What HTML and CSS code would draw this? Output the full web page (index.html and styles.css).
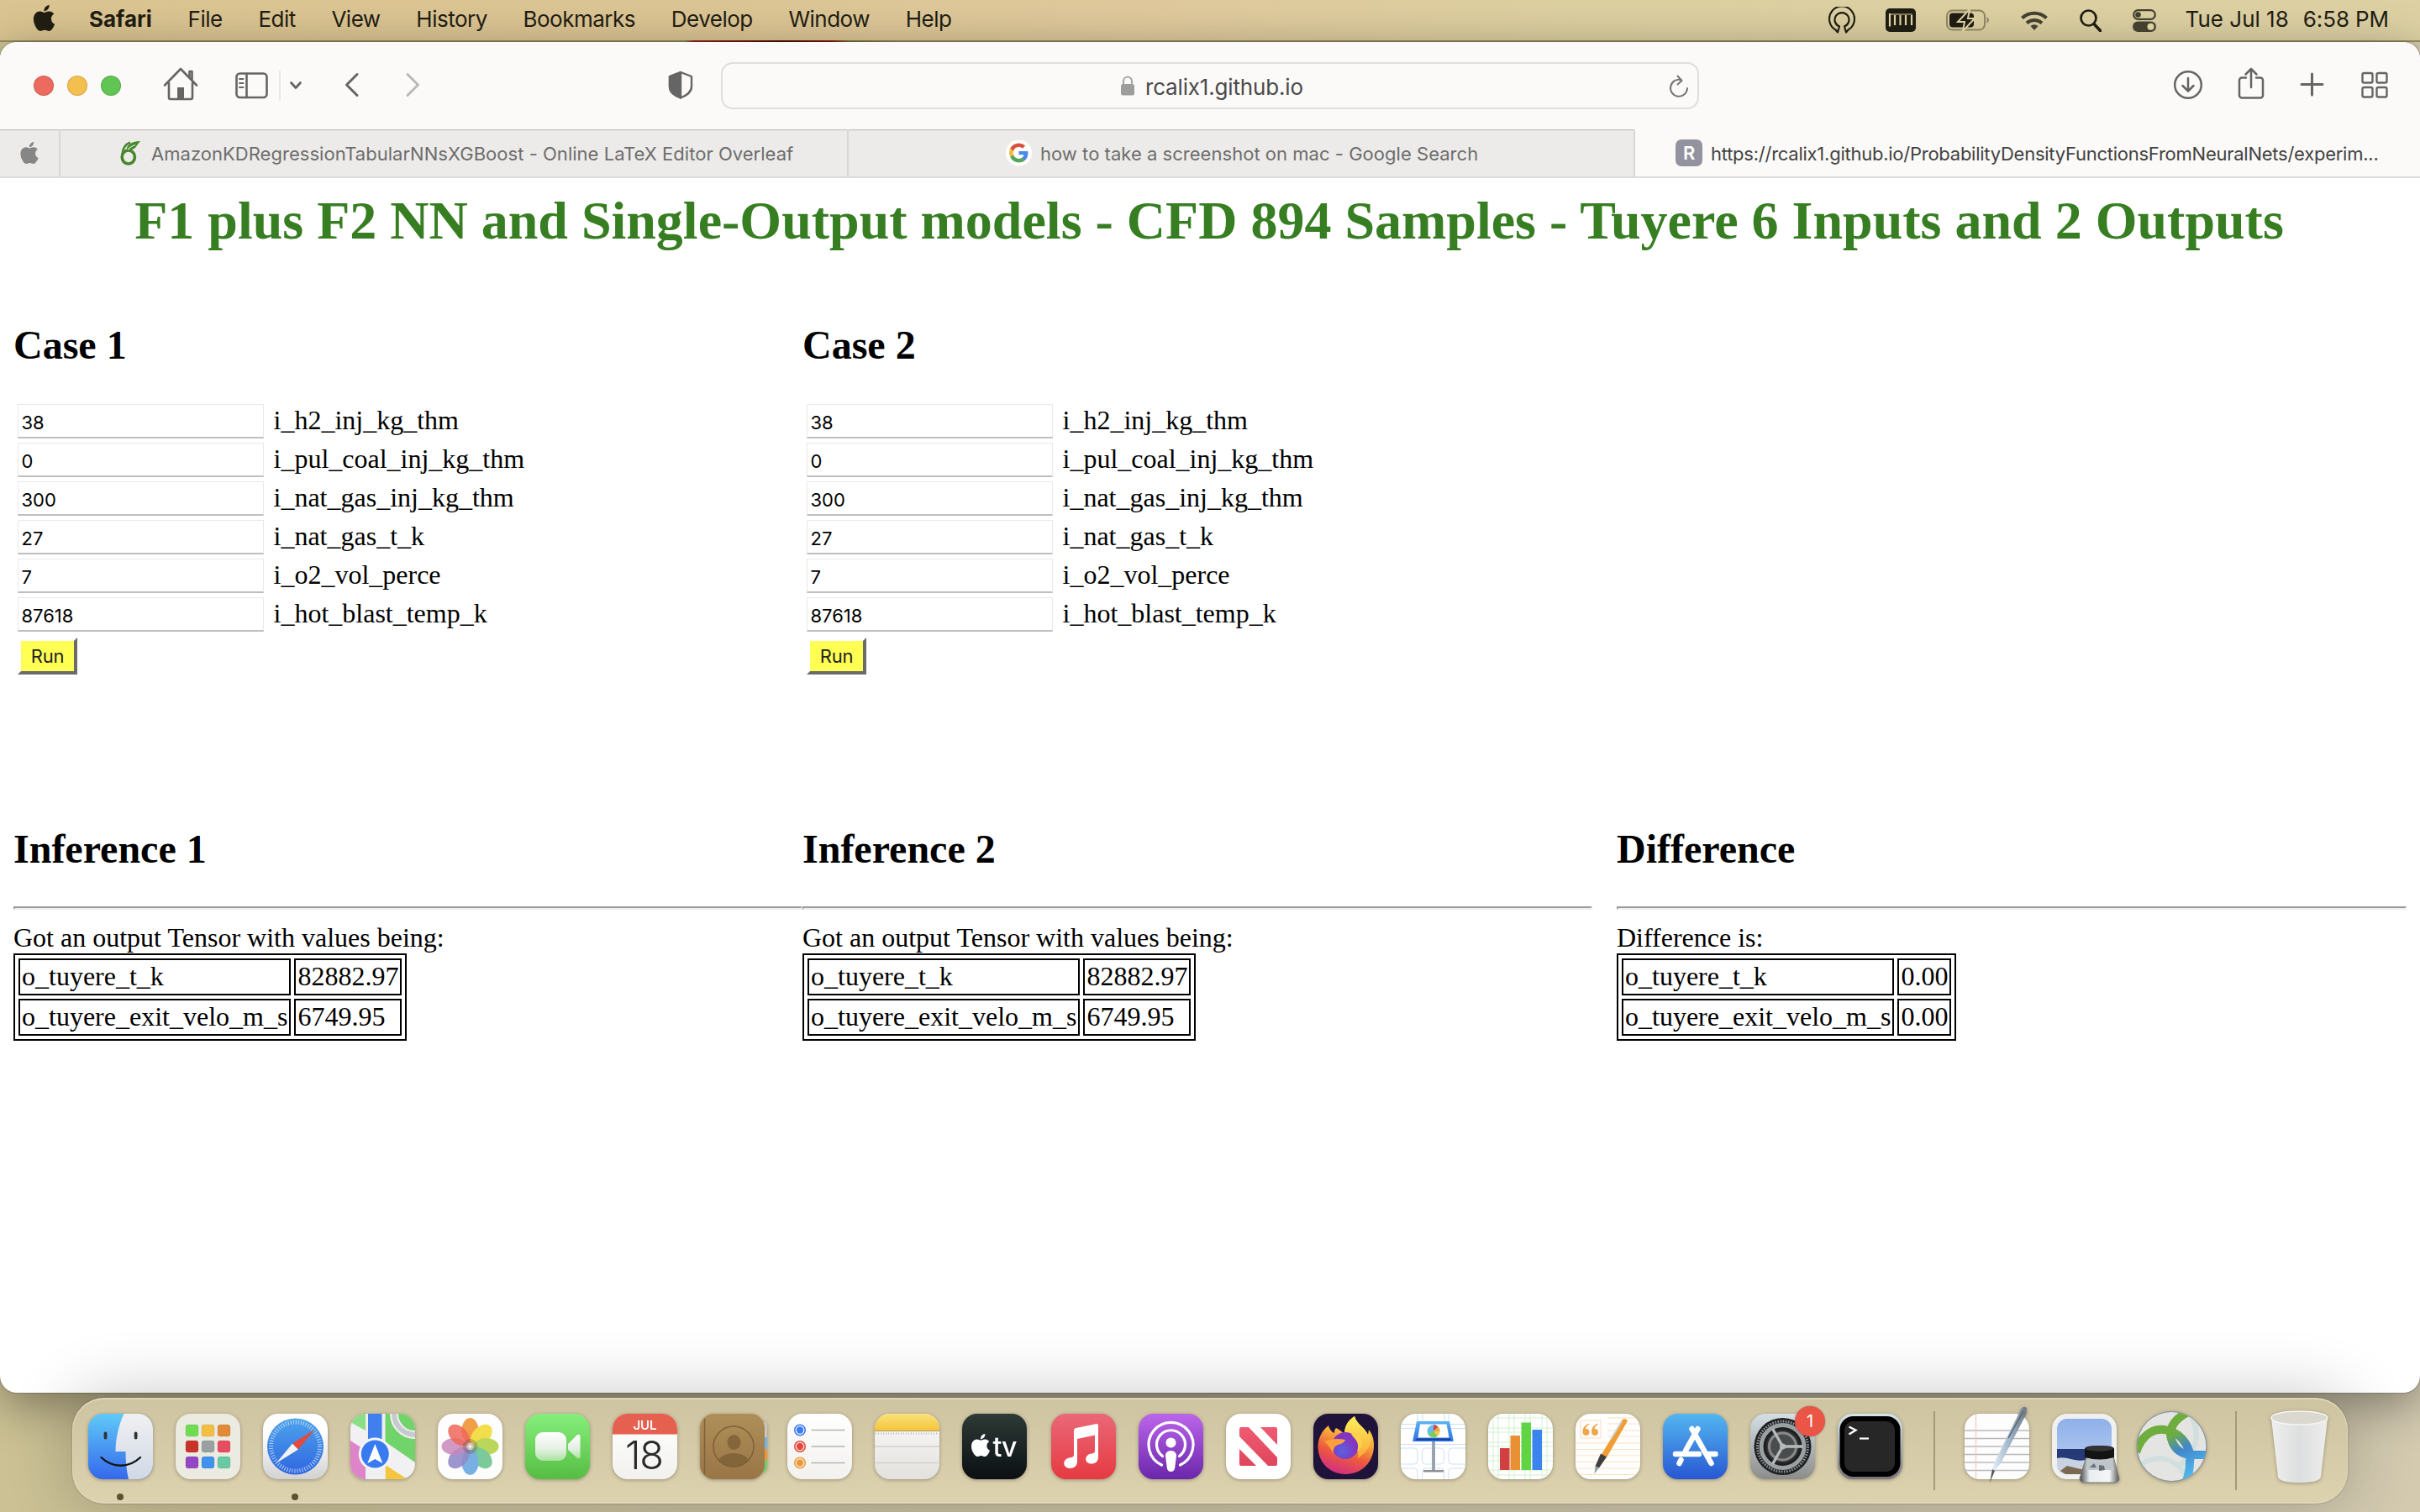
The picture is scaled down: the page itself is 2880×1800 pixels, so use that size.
FILE: index.html
```html
<!DOCTYPE html>
<html lang="en">
<head>
<meta charset="utf-8">
<title>Safari</title>
<link rel="stylesheet" href="styles.css">
</head>
<body>
<svg class="defs" aria-hidden="true">
  <defs>
    <symbol id="apple" viewBox="0 0 24 24"><path d="M12.152 6.896c-.948 0-2.415-1.078-3.96-1.04-2.04.027-3.91 1.183-4.961 3.014-2.117 3.675-.546 9.103 1.519 12.09 1.013 1.454 2.208 3.09 3.792 3.039 1.52-.065 2.09-.987 3.935-.987 1.831 0 2.35.987 3.96.948 1.637-.026 2.676-1.48 3.676-2.948 1.156-1.688 1.636-3.325 1.662-3.415-.039-.013-3.182-1.221-3.22-4.857-.026-3.04 2.48-4.494 2.597-4.559-1.429-2.09-3.623-2.324-4.39-2.376-2-.156-3.675 1.09-4.61 1.09zM15.53 3.83c.843-1.012 1.4-2.427 1.245-3.83-1.207.052-2.662.805-3.532 1.818-.78.896-1.454 2.338-1.273 3.714 1.338.104 2.715-.688 3.559-1.701"/></symbol>
    <clipPath id="tile"><rect width="77" height="78" rx="18"/></clipPath>
    <linearGradient id="gFinder" x2="0" y2="1"><stop offset="0" stop-color="#5fcaf8"/><stop offset="1" stop-color="#3568ec"/></linearGradient>
    <linearGradient id="gFace" x2="0" y2="1"><stop offset="0" stop-color="#f0f0f2"/><stop offset="1" stop-color="#d0d9e6"/></linearGradient>
    <linearGradient id="gSilver" x2="0" y2="1"><stop offset=".3" stop-color="#fff"/><stop offset="1" stop-color="#d2d2d2"/></linearGradient>
    <linearGradient id="gCompass" x2="0" y2="1"><stop offset="0" stop-color="#4da3ec"/><stop offset="1" stop-color="#2f66e0"/></linearGradient>
    <linearGradient id="gGreen" x2="0" y2="1"><stop offset="0" stop-color="#86ee7c"/><stop offset="1" stop-color="#56bd43"/></linearGradient>
    <linearGradient id="gCam" x2="0" y2="1"><stop offset="0" stop-color="#fff"/><stop offset=".6" stop-color="#e4efe2"/><stop offset="1" stop-color="#a9e39f"/></linearGradient>
    <linearGradient id="gPaper" x2="0" y2="1"><stop offset="0" stop-color="#fff"/><stop offset="1" stop-color="#f2f1ee"/></linearGradient>
    <linearGradient id="gBook" x2="0" y2="1"><stop offset="0" stop-color="#ae8f58"/><stop offset="1" stop-color="#9a7547"/></linearGradient>
    <linearGradient id="gYellow" x2="0" y2="1"><stop offset="0" stop-color="#fae27a"/><stop offset="1" stop-color="#f4c43c"/></linearGradient>
    <linearGradient id="gNote" x2="0" y2="1"><stop offset="0" stop-color="#fafafa"/><stop offset="1" stop-color="#e3e1dd"/></linearGradient>
    <linearGradient id="gTv" x2="0" y2="1"><stop offset="0" stop-color="#2d3a36"/><stop offset="1" stop-color="#0b0f12"/></linearGradient>
    <linearGradient id="gMusic" x2="0" y2="1"><stop offset="0" stop-color="#ea6878"/><stop offset="1" stop-color="#e63a41"/></linearGradient>
    <linearGradient id="gPod" x2="0" y2="1"><stop offset="0" stop-color="#bb66ea"/><stop offset="1" stop-color="#6b26ab"/></linearGradient>
    <linearGradient id="gNews" x2="0" y2="1"><stop offset="0" stop-color="#ee5b71"/><stop offset="1" stop-color="#e0465c"/></linearGradient>
    <linearGradient id="gFox" x1=".75" y1="0" x2=".4" y2="1"><stop offset="0" stop-color="#fcee52"/><stop offset=".4" stop-color="#f7a93a"/><stop offset=".68" stop-color="#ee5a3c"/><stop offset="1" stop-color="#d42f7f"/></linearGradient>
    <linearGradient id="gFlame" x2="0" y2="1"><stop offset="0" stop-color="#fdf05a"/><stop offset="1" stop-color="#f9a83a"/></linearGradient>
    <radialGradient id="gGlobe" cx=".4" cy=".7"><stop offset="0" stop-color="#5a62e0"/><stop offset="1" stop-color="#8435c0"/></radialGradient>
    <linearGradient id="gScreen" x2="0" y2="1"><stop offset="0" stop-color="#5ab4f4"/><stop offset="1" stop-color="#2f6ee4"/></linearGradient>
    <linearGradient id="gStore" x2="0" y2="1"><stop offset="0" stop-color="#53b6f0"/><stop offset="1" stop-color="#2857d3"/></linearGradient>
    <linearGradient id="gGear" x2="0" y2="1"><stop offset="0" stop-color="#d3dfe5"/><stop offset="1" stop-color="#8d8c8b"/></linearGradient>
    <linearGradient id="gTerm" x2="0" y2="1"><stop offset="0" stop-color="#d4e6ea"/><stop offset="1" stop-color="#77757a"/></linearGradient>
    <linearGradient id="gPen"><stop offset="0" stop-color="#e5effa"/><stop offset=".5" stop-color="#9fb5c9"/><stop offset="1" stop-color="#6c7882"/></linearGradient>
    <linearGradient id="gSky" x2="0" y2="1"><stop offset="0" stop-color="#8fb0ea"/><stop offset="1" stop-color="#bcd0f0"/></linearGradient>
    <linearGradient id="gGlass"><stop offset="0" stop-color="#444"/><stop offset=".25" stop-color="#e9edf0"/><stop offset=".75" stop-color="#f4f6f7"/><stop offset="1" stop-color="#555"/></linearGradient>
    <linearGradient id="gCup"><stop offset="0" stop-color="#f2f2f3"/><stop offset=".5" stop-color="#e0e1e3"/><stop offset="1" stop-color="#f0f0f1"/></linearGradient>
    <linearGradient id="gRing" gradientUnits="userSpaceOnUse" x1="32" y1="18" x2="58" y2="72"><stop offset="0" stop-color="#6fad3f"/><stop offset=".15" stop-color="#6fad3f"/><stop offset=".5" stop-color="#4286c8"/><stop offset="1" stop-color="#4eb4ec"/></linearGradient>
  </defs>
</svg>

<header class="menubar">
  <svg class="menu-apple"><use href="#apple"/></svg>
  <nav class="menus">
    <b>Safari</b><span>File</span><span>Edit</span><span>View</span><span>History</span><span>Bookmarks</span><span>Develop</span><span>Window</span><span>Help</span>
  </nav>
  <div class="status">
    <svg width="32" height="32" viewBox="0 0 32 32" fill="none" stroke="#1f1c12" stroke-width="2.2" stroke-linejoin="round"><path d="M11 31 L8.500 28 A15 15 0 1 1 23.500 28 L21 31 L19 24 A8.500 8.500 0 1 0 13 24 Z" transform="translate(0 -.5)"/></svg>
    <svg width="36" height="28" viewBox="0 0 36 28"><rect width="36" height="28" rx="5" fill="#1f1c12"/><path d="M5 6v15.500M11 8v12M17.500 8v12M24 8v12M31 8v12" stroke="#ddd0a0" stroke-width="2.200"/><path d="M5 7h27" stroke="#ddd0a0" stroke-width="1"/></svg>
    <svg width="52" height="26" viewBox="0 0 52 26"><rect x="1" y="1.500" width="45" height="23" rx="6.500" fill="none" stroke="#8b8362" stroke-width="2"/><path d="M48.500 9a4.500 4.500 0 0 1 0 8z" fill="#8b8362"/><rect x="4" y="4.500" width="29" height="17" rx="4" fill="#1f1c12"/><path d="M28 0 L14 15h8L20 26 L34 11h-8z" fill="#1f1c12" stroke="#ddd0a0" stroke-width="2"/></svg>
    <svg width="34" height="25" viewBox="0 0 34 25" fill="none" stroke="#444030" stroke-width="4"><path d="M2.500 9.500a21 21 0 0 1 29 0M8 15.500a13 13 0 0 1 18 0"/><path d="M17 24l-4.500-5a6.500 6.500 0 0 1 9 0z" fill="#444030" stroke="none"/></svg>
    <svg width="26" height="27" viewBox="0 0 26 27" fill="none" stroke="#1f1c12" stroke-width="2.700"><circle cx="10.500" cy="10.500" r="9"/><path d="M17 17.500l7.500 8" stroke-width="3.500" stroke-linecap="round"/></svg>
    <svg width="28" height="27" viewBox="0 0 28 27"><rect x="1.200" y="1.200" width="25.600" height="10.600" rx="5.300" fill="none" stroke="#444030" stroke-width="2.200"/><circle cx="6.500" cy="6.500" r="3.300" fill="#444030"/><rect y="14.500" width="28" height="12.500" rx="6.200" fill="#444030"/><circle cx="21.500" cy="20.700" r="4" fill="#ddd0a0"/></svg>
    <span class="date">Tue Jul 18</span><span class="clock">6:58 PM</span>
  </div>
</header>

<main class="desktop">
  <div class="wallpaper-sliver"></div>
  <section class="window">
    <div class="toolbar">
      <div class="tools-left">
        <i class="light red"></i><i class="light amber"></i><i class="light green"></i>
        <svg class="ico home" viewBox="0 0 48 48" stroke-width="2.600"><path d="M5 26.500L24 7l19 19.500M34.500 17v-7h3v10M10 24v17a2 2 0 0 0 2 2h24a2 2 0 0 0 2-2V24"/><path d="M20 29h8v14h-8z" fill="#656565" stroke="none"/></svg>
        <svg class="ico side" viewBox="0 0 48 48" stroke-width="2.600"><rect x="5.500" y="9.500" width="36" height="28.500" rx="4"/><path d="M17.500 10v28"/><path d="M9 16h4.500M9 21h4.500M9 26h4.500" stroke-width="2"/></svg>
        <i class="divider"></i>
        <svg class="ico chev" viewBox="0 0 24 24" stroke-width="2.800"><path d="M6.500 8.500l5.500 6 5.500-6"/></svg>
        <svg class="ico back" viewBox="0 0 48 48" stroke-width="3"><path d="M30 10.500L17.500 23 30 35.500"/></svg>
        <svg class="ico fwd" viewBox="0 0 48 48" stroke-width="3"><path d="M18 10.500L30.500 23 18 35.500"/></svg>
        <svg class="ico shield" viewBox="0 0 48 48" stroke-width="2.400"><path d="M24 8l13 5v12c0 7-6 10.500-13 13.500C17 35.500 11 32 11 25V13z"/><path d="M24 8v30.500C17 35.500 11 32 11 25V13z" fill="#656565"/></svg>
      </div>
      <div class="address">
        <svg width="16" height="24" viewBox="0 0 16 24"><rect y="10" width="16" height="13.500" rx="2.500" fill="#9d9d9b"/><path d="M3 11V6.500a5 5 0 0 1 10 0V11" fill="none" stroke="#a8a8a6" stroke-width="2.200"/></svg>
        <span>rcalix1.github.io</span>
        <svg class="reload" width="24" height="28" viewBox="0 0 24 28" fill="none" stroke="#747474" stroke-width="2" stroke-linecap="round" stroke-linejoin="round"><path d="M15 6.300A10 10 0 1 0 22 16M10.500 1.500L15.500 7l-5 4.500"/></svg>
      </div>
      <div class="tools-right">
        <svg class="ico" viewBox="0 0 48 48" stroke-width="2.500"><circle cx="24" cy="23" r="15.800"/><path d="M24 15v15M17.500 24l6.500 6.500 6.500-6.500"/></svg>
        <svg class="ico share" viewBox="0 0 48 48" stroke-width="2.500"><path d="M18 14.500h-5a3 3 0 0 0-3 3V35.500a3 3 0 0 0 3 3h22a3 3 0 0 0 3-3V17.500a3 3 0 0 0-3-3h-5M24 26V4.500M17.500 10.500L24 4l6.500 6.500"/></svg>
        <svg class="ico plus" viewBox="0 0 48 48" stroke-width="3"><path d="M24.500 10v25M12 22.500h25"/></svg>
        <svg class="ico grid" viewBox="0 0 48 48" stroke-width="2.400"><rect x="9.500" y="9" width="12" height="11.500" rx="2"/><rect x="26.500" y="9" width="12" height="11.500" rx="2"/><rect x="9.500" y="26" width="12" height="11.500" rx="2"/><rect x="26.500" y="26" width="12" height="11.500" rx="2"/></svg>
      </div>
    </div>
    <div class="tabs">
      <div class="tab pinned"><svg width="26" height="26" fill="#868686"><use href="#apple"/></svg></div>
      <div class="tab t1"><svg width="25" height="30" viewBox="0 0 25 30" fill="none" stroke="#46892c"><ellipse cx="9.800" cy="20" rx="7.600" ry="8" stroke-width="3.600"/><path d="M2.500 17C3 9 7 4.500 12 2.500" stroke-width="2.600"/><path d="M7.500 11.500C8 6 12 1.500 24 1c-1 2-3 3-4 5-2 4-6 6-11 6.500" stroke="none" fill="#46892c"/><path d="M9 11q4-4 9-5.500" stroke="#ecebe9" stroke-width="1.200"/></svg><span>AmazonKDRegressionTabularNNsXGBoost - Online LaTeX Editor Overleaf</span></div>
      <div class="tab t2"><svg width="31" height="32" viewBox="0 0 31 32"><circle cx="15.500" cy="16" r="15.500" fill="#fff"/><g transform="translate(3 3.500) scale(1.040)"><path d="M22.560 12.250c0-.780-.070-1.530-.200-2.250H12v4.260h5.920a5.060 5.060 0 0 1-2.200 3.320v2.770h3.570c2.080-1.920 3.270-4.740 3.270-8.100z" fill="#4f86ec"/><path d="M12 23c2.970 0 5.460-.980 7.280-2.660l-3.570-2.770c-.980.660-2.230 1.060-3.710 1.060-2.860 0-5.290-1.930-6.160-4.530H2.180v2.840A11 11 0 0 0 12 23z" fill="#58a55c"/><path d="M5.840 14.100a6.600 6.600 0 0 1 0-4.200V7.060H2.180a11 11 0 0 0 0 9.880z" fill="#f1bd42"/><path d="M12 5.380c1.620 0 3.060.560 4.210 1.640l3.150-3.150A11 11 0 0 0 2.180 7.060L5.840 9.900C6.710 7.310 9.140 5.380 12 5.380z" fill="#d95140"/></g></svg><span>how to take a screenshot on mac - Google Search</span></div>
      <div class="tab t3"><i class="letter">R</i><span>https://rcalix1.github.io/ProbabilityDensityFunctionsFromNeuralNets/experim...</span></div>
    </div>

    <article class="page">
      <h1>F1 plus F2 NN and Single-Output models - CFD 894 Samples - Tuyere 6 Inputs and 2 Outputs</h1>
      <div class="cols cases">
        <form>
          <h2>Case 1</h2>
          <label><input value="38">i_h2_inj_kg_thm</label>
          <label><input value="0">i_pul_coal_inj_kg_thm</label>
          <label><input value="300">i_nat_gas_inj_kg_thm</label>
          <label><input value="27">i_nat_gas_t_k</label>
          <label><input value="7">i_o2_vol_perce</label>
          <label><input value="87618">i_hot_blast_temp_k</label>
          <button type="button">Run</button>
        </form>
        <form>
          <h2>Case 2</h2>
          <label><input value="38">i_h2_inj_kg_thm</label>
          <label><input value="0">i_pul_coal_inj_kg_thm</label>
          <label><input value="300">i_nat_gas_inj_kg_thm</label>
          <label><input value="27">i_nat_gas_t_k</label>
          <label><input value="7">i_o2_vol_perce</label>
          <label><input value="87618">i_hot_blast_temp_k</label>
          <button type="button">Run</button>
        </form>
      </div>
      <div class="cols results">
        <section>
          <h2>Inference 1</h2><hr>
          <p>Got an output Tensor with values being:</p>
          <table><tr><td>o_tuyere_t_k</td><td>82882.97</td></tr><tr><td>o_tuyere_exit_velo_m_s</td><td>6749.95</td></tr></table>
        </section>
        <section>
          <h2>Inference 2</h2><hr>
          <p>Got an output Tensor with values being:</p>
          <table><tr><td>o_tuyere_t_k</td><td>82882.97</td></tr><tr><td>o_tuyere_exit_velo_m_s</td><td>6749.95</td></tr></table>
        </section>
        <section class="diff">
          <h2>Difference</h2><hr>
          <p>Difference is:</p>
          <table><tr><td>o_tuyere_t_k</td><td>0.00</td></tr><tr><td>o_tuyere_exit_velo_m_s</td><td>0.00</td></tr></table>
        </section>
      </div>
    </article>
  </section>

  <footer class="dock">
    <!-- Finder -->
    <div class="app running"><svg viewBox="0 0 77 78"><g clip-path="url(#tile)"><rect width="77" height="78" fill="url(#gFinder)"/><path d="M42.500 0C36 14 32.500 30 32.500 45h12c0 12 1 22 3.500 33H77V0z" fill="url(#gFace)"/></g><path d="M20.500 23.500v5M56.600 23.500v5" stroke="#333" stroke-width="3.800" stroke-linecap="round"/><path d="M15.500 52c13 13 33 13 46.500 0" fill="none" stroke="#151515" stroke-width="2.400" stroke-linecap="round"/></svg></div>
    <!-- Launchpad -->
    <div class="app"><svg viewBox="0 0 77 78"><rect width="77" height="78" rx="18" fill="#ecebe2"/><g stroke="#0002" stroke-width=".6"><rect x="12" y="13" width="15" height="14" rx="3" fill="#6fdc52"/><rect x="31" y="13" width="15" height="14" rx="3" fill="#f3bf43"/><rect x="50" y="13" width="15" height="14" rx="3" fill="#e28a36"/><rect x="12" y="32" width="15" height="14" rx="3" fill="#c8332a"/><rect x="31" y="32" width="15" height="14" rx="3" fill="#9ba1a3"/><rect x="50" y="32" width="15" height="14" rx="3" fill="#e84c60"/><rect x="12" y="51" width="15" height="14" rx="3" fill="#9346c6"/><rect x="31" y="51" width="15" height="14" rx="3" fill="#3f92ee"/><rect x="50" y="51" width="15" height="14" rx="3" fill="#68c9a4"/></g></svg></div>
    <!-- Safari -->
    <div class="app running"><svg viewBox="0 0 77 78"><rect width="77" height="78" rx="18" fill="url(#gSilver)"/><circle cx="38.500" cy="39" r="33.500" fill="url(#gCompass)"/><circle cx="38.500" cy="39" r="29" fill="none" stroke="#d5e6fa" stroke-width="5" stroke-dasharray=".8 2.240"/><path d="M15.500 59L35 35.500l7 7z" fill="#f2f2f2"/><path d="M62 18.500L35 35.500l7 7z" fill="#e4493c"/></svg></div>
    <!-- Maps -->
    <div class="app"><svg viewBox="0 0 77 78"><g clip-path="url(#tile)"><rect width="77" height="78" fill="#f1f1f4"/><path d="M0 0h18v20L0 10z" fill="#8ade84"/><path d="M41 0h36v58L41 33z" fill="#71d46a"/><path d="M0 32l22 14v32H0z" fill="#de84c8"/><path d="M41.500 61L68 78H41.500z" fill="#f4c63f"/><circle cx="77" cy="0" r="25" fill="none" stroke="#f0f0f2" stroke-width="10"/><circle cx="77" cy="0" r="25" fill="none" stroke="#c8c8d0" stroke-width="6"/><path d="M18 0h23.500v78H18z" fill="#efeff2"/><path d="M21 0h16.500v40H21z" fill="#417fee"/></g><circle cx="29.300" cy="48" r="19.500" fill="#f4f4f8"/><circle cx="29.300" cy="48" r="16.500" fill="#387bf0"/><path d="M29.300 36l9 23-9-5-9 5z" fill="#fff"/></svg></div>
    <!-- Photos -->
    <div class="app"><svg viewBox="0 0 77 78"><rect width="77" height="78" rx="18" fill="#fdfdfd"/><g transform="translate(38.500 39)" opacity=".92"><ellipse cy="-19" rx="10" ry="15" fill="#f1963a"/><ellipse cy="-19" rx="10" ry="15" fill="#f2dc3c" transform="rotate(45)"/><ellipse cy="-19" rx="10" ry="15" fill="#b5d44f" transform="rotate(90)"/><ellipse cy="-19" rx="10" ry="15" fill="#72c691" transform="rotate(135)"/><ellipse cy="-19" rx="10" ry="15" fill="#6eaae2" transform="rotate(180)"/><ellipse cy="-19" rx="10" ry="15" fill="#8a7fc4" opacity=".9" transform="rotate(225)"/><ellipse cy="-19" rx="10" ry="15" fill="#c47fb4" opacity=".85" transform="rotate(270)"/><ellipse cy="-19" rx="10" ry="15" fill="#ee5a4c" opacity=".85" transform="rotate(315)"/><circle r="9" fill="#5a3a30" opacity=".3"/></g><circle cx="38.500" cy="39" r="1.500" fill="#fff"/></svg></div>
    <!-- FaceTime -->
    <div class="app"><svg viewBox="0 0 77 78"><rect width="77" height="78" rx="18" fill="url(#gGreen)"/><rect x="12" y="22" width="37" height="34" rx="9" fill="url(#gCam)"/><path d="M51 36l10-10c2-2 4.500-1.500 4.500 1v24c0 2.500-2.500 3-4.500 1L51 43z" fill="url(#gCam)"/></svg></div>
    <!-- Calendar -->
    <div class="app"><svg viewBox="0 0 77 78"><rect width="77" height="78" rx="18" fill="url(#gPaper)"/><g clip-path="url(#tile)"><path d="M0 0h77v24.500H0z" fill="#e6604f"/></g><text x="38.500" y="19" class="cal-month">JUL</text><text x="37.500" y="66" class="cal-day">18</text></svg></div>
    <!-- Contacts -->
    <div class="app"><svg viewBox="0 0 77 78"><path d="M70 10h6q4 0 4 6v12H70z" fill="#c9c7bf"/><path d="M70 28h10v14H70z" fill="#6cb6ea"/><path d="M70 42h10v13H70z" fill="#ef9637"/><path d="M70 55h10v7q0 6-5 8h-5z" fill="#6fce66"/><rect width="77" height="78" rx="17" fill="url(#gBook)"/><path d="M5.500 6v66" stroke="#7d6036" stroke-width="1.500"/><circle cx="40" cy="39" r="24" fill="none" stroke="#7d6036" stroke-width="1.500"/><g fill="#7d6036" opacity=".8"><ellipse cx="40.500" cy="34" rx="8" ry="9"/><path d="M22 56c4-12 32-12 36 0-10 10-26 10-36 0z"/></g></svg></div>
    <!-- Reminders -->
    <div class="app"><svg viewBox="0 0 77 78"><rect width="77" height="78" rx="18" fill="url(#gPaper)"/><g stroke-width="1.600" fill="none"><circle cx="15" cy="19.500" r="6.200" stroke="#3b7cf0"/><circle cx="15" cy="39" r="6.200" stroke="#e2493b"/><circle cx="15" cy="58.500" r="6.200" stroke="#eb9a3a"/></g><circle cx="15" cy="19.500" r="4.200" fill="#3b7cf0"/><circle cx="15" cy="39" r="4.200" fill="#e2493b"/><circle cx="15" cy="58.500" r="4.200" fill="#eb9a3a"/><path d="M28.500 19.500h40M28.500 39h40M28.500 58.500h40" stroke="#b5b5b3" stroke-width="1.400"/></svg></div>
    <!-- Notes -->
    <div class="app"><svg viewBox="0 0 77 78"><rect width="77" height="78" rx="18" fill="url(#gNote)"/><g clip-path="url(#tile)"><path d="M0 0h77v20H0z" fill="url(#gYellow)"/></g><path d="M0 20.500h77" stroke="#b29a52"/><path d="M1 23.500h75" stroke="#bbb" stroke-width="2" stroke-dasharray="1 2"/><path d="M0 39h77M0 58.500h77" stroke="#d2d1cf" stroke-width="1.400"/></svg></div>
    <!-- TV -->
    <div class="app tv"><svg viewBox="0 0 77 78"><rect width="77" height="78" rx="18" fill="url(#gTv)"/><use href="#apple" x="8.500" y="24" width="27" height="27" fill="#fff"/><text x="36.500" y="51" class="tv-word">tv</text></svg></div>
    <!-- Music -->
    <div class="app"><svg viewBox="0 0 77 78"><rect width="77" height="78" rx="18" fill="url(#gMusic)"/><path d="M27 20q0-2.500 2.500-3L53 12.200q3-.600 3 2V52c0 5-4 7.500-8 7.500-9 0-9-11 0-12 3-.400 4-1 4-4V25.500L31 30v27c0 5-4 8-8.500 8-9.500 0-9.500-11-1-12.500 4-.700 5.500-1 5.500-4z" fill="#fff"/></svg></div>
    <!-- Podcasts -->
    <div class="app"><svg viewBox="0 0 77 78"><rect width="77" height="78" rx="18" fill="url(#gPod)"/><g fill="none" stroke="#fff" stroke-width="3.200" stroke-linecap="round"><path d="M27.500 61a26.500 26.500 0 1 1 22 0M28.500 50.500a17 17 0 1 1 20 0"/></g><circle cx="38.500" cy="34.500" r="6" fill="#fff"/><path d="M32 50c0-8 13-8 13 0l-1.800 14.500c-.700 6-8.700 6-9.400 0z" fill="#fff"/></svg></div>
    <!-- News -->
    <div class="app"><svg viewBox="0 0 77 78"><rect width="77" height="78" rx="18" fill="#fff"/><path d="M16 18q0-2 2-2h9l34 36v8q0 2-2 2h-9L16 27zM41 16h18q2 0 2 2v19zM16 42l20 20H18q-2 0-2-2z" fill="url(#gNews)"/></svg></div>
    <!-- Firefox -->
    <div class="app"><svg viewBox="0 0 77 78"><rect width="77" height="78" rx="18" fill="#20133a"/><path d="M49 3c-8 5-12 12-12 21-3-3-6-5-10-7-2 2-2 4-2 6-3-1-6-5-7-9C10 20 5 30 5.500 41 7 61 22 72 38.500 72 57 72 72 58 72 38c0-8-2-14-6-19l-1 6C60 15 52 13 49 3z" fill="url(#gFox)"/><path d="M49 3c-8 5-12 12-12 21 9-3 16 2 17 9l-1 20c11-8 16-14 15-28l-3 0C60 15 52 13 49 3z" fill="url(#gFlame)"/><circle cx="38" cy="38" r="16" fill="url(#gGlobe)"/><path d="M13 33c7-3 15-4 25-2-1 3-4 5-9 6-5 2-6 7-5 12-2-6-5-10-11-16z" fill="#f9a03c"/><path d="M47 27c5 5 8 10 5 18 5-3 7-10 5-16-3-5-7-6-12-5z" fill="#fbd34b"/></svg></div>
    <!-- Keynote -->
    <div class="app"><svg viewBox="0 0 77 78"><rect width="77" height="78" rx="18" fill="#fff"/><g clip-path="url(#tile)" fill="none" stroke="#cfe0f2"><path d="M0 12.500h77M0 17.500h77M20 0v17M26 0v17M52 0v17M57 0v17"/><rect x="-8" y="41" width="28" height="19" rx="4"/><rect x="25.500" y="41" width="26" height="19" rx="4"/><rect x="57" y="41" width="28" height="19" rx="4"/><rect x="-8" y="65" width="28" height="19" rx="4"/><rect x="25.500" y="65" width="26" height="19" rx="4"/><rect x="57" y="65" width="28" height="19" rx="4"/><path d="M0 36.500h77"/></g><path d="M37 33h4v34h-4z" fill="#9aa4b0"/><path d="M27 67h24v2.500H27z" fill="#8d8f92"/><path d="M19 9h39l4.500 22v2h-48v-2z" fill="url(#gScreen)"/><path d="M23 12.500h31.500l3 16h-37z" fill="#fff"/><path d="M18.500 30.500h41" stroke="#153f9a" stroke-width="1.800"/><circle cx="39" cy="20.700" r="7.500" fill="#66bdf0"/><path d="M39 20.700v-7.500a7.500 7.500 0 0 1 5.500 2.400z" fill="#d8434a"/><path d="M39 20.700l5.500-5.100a7.500 7.500 0 0 1 2 5.100z" fill="#f2a23c"/><path d="M39 20.700h7.500a7.500 7.500 0 0 1-3 6z" fill="#f6cf45"/><path d="M39 20.700l4.500 6a7.500 7.500 0 0 1-11-2.200z" fill="#7bcb62"/></svg></div>
    <!-- Numbers -->
    <div class="app"><svg viewBox="0 0 77 78"><rect width="77" height="78" rx="18" fill="#fff"/><path clip-path="url(#tile)" d="M6 0v78M12 0v78M25 0v78M31 0v78M44 0v78M50 0v78M64 0v78M70 0v78M0 5h77M0 17h77M0 22h77M0 34h77M0 39h77M0 50h77M0 56h77M0 67h77M0 73h77" stroke="#d3f0d0"/><rect x="14" y="41" width="11.500" height="26" fill="#d13f41"/><rect x="26.500" y="26" width="11.500" height="41" fill="#ea9034"/><rect x="39.500" y="10.500" width="11.500" height="56.500" fill="#5fd544"/><rect x="52.500" y="19" width="11.500" height="48" fill="#3b84ee"/></svg></div>
    <!-- Pages -->
    <div class="app"><svg viewBox="0 0 77 78"><rect width="77" height="78" rx="18" fill="#fefefe"/><path clip-path="url(#tile)" d="M38 5h39M38 12h39M38 20h39M38 27h39M0 35h77M0 42.500h77M0 50h77M0 57.500h77M0 65h77M0 72.500h77" stroke="#fbe3bd"/><rect x="6" y="8" width="24" height="21" fill="none" stroke="#f8dcc0"/><path d="M16.500 11.500C11 13 8.500 17 8.500 21.500c0 6 8 6 8 .500 0-3-2-4.500-4.500-4 .500-2.500 2-4.500 4.500-5.500zM27 11.500c-5.500 1.500-8 5.500-8 10 0 6 8 6 8 .500 0-3-2-4.500-4.500-4 .500-2.500 2-4.500 4.500-5.500z" fill="#efa648"/><path d="M55.500 7.500q4-3 6.500 1L36.500 53l-6.500-3z" fill="#ef9d34"/><path d="M55 9L42 30" stroke="#cfd8df" stroke-width="2"/><path d="M30 47.500l7 4-9 13-4.500-2z" fill="#3f3f3f"/><path d="M23.500 62.500l4.500 2-5.500 7z" fill="#93a0aa"/></svg></div>
    <!-- App Store -->
    <div class="app"><svg viewBox="0 0 77 78"><rect width="77" height="78" rx="18" fill="url(#gStore)"/><g stroke="#fff" stroke-width="6.500" stroke-linecap="round"><path d="M41.500 18L27 44M21.500 55l-2 4M34.500 18L57.500 59M15 48h28M53 48h9.500"/></g></svg></div>
    <!-- System Settings -->
    <div class="app"><svg viewBox="0 0 77 78"><rect width="77" height="78" rx="18" fill="url(#gGear)"/><circle cx="38.500" cy="39" r="34" fill="#1e1f21"/><circle cx="38.500" cy="39" r="30" fill="none" stroke="#8f9396" stroke-width="3" stroke-dasharray="1.600 1.540"/><circle cx="38.500" cy="39" r="25.500" fill="none" stroke="#9ba0a3" stroke-width="5"/><circle cx="38.500" cy="39" r="19" fill="#4a4b4c" stroke="#2d2d2e" stroke-width="2"/><circle cx="38.500" cy="39" r="16" fill="none" stroke="#878a8c" stroke-width="3"/><path d="M38.500 39h24M38.500 39l-12-21M38.500 39l-12 21" stroke="#b5babd" stroke-width="3.400"/><circle cx="38.500" cy="39" r="3.500" fill="#b5babd"/></svg><b class="badge">1</b></div>
    <!-- Terminal -->
    <div class="app"><svg viewBox="0 0 77 78"><rect width="77" height="78" rx="18" fill="url(#gTerm)"/><rect x="2.500" y="3" width="72" height="72" rx="16" fill="#000"/><rect x="8" y="9" width="60" height="60" rx="10" fill="#272727"/><path d="M13.500 15.500l8 4-8 5" fill="none" stroke="#fff" stroke-width="2.400"/><path d="M26 29.500h11" stroke="#fff" stroke-width="2.200"/></svg></div>
    <i class="rule"></i>
    <!-- TextEdit -->
    <div class="app"><svg viewBox="0 0 77 78"><rect width="77" height="78" rx="18" fill="#fdfdfd"/><path d="M0 20h77M0 29.500h77M0 39h77M0 48.500h77M0 58h77M0 67.500h77" stroke="#b9b9b9" stroke-width="1.300"/><path d="M13.500 1v76" stroke="#f4c5c3" stroke-width="1.200"/><path d="M67.500 -6q4-4 6.500-.500L73.500 0 43 59l-7.500 9-2.500-1 3-10z" fill="url(#gPen)"/><path d="M70 -3l-18 32" stroke="#4d5d69" stroke-width="1.300"/><path d="M33 66l3 2-6 14z" fill="#555"/></svg></div>
    <!-- Preview -->
    <div class="app"><svg viewBox="0 0 77 78"><rect width="77" height="78" rx="18" fill="#f0f0ef"/><rect x="6" y="6" width="65" height="66" rx="12" fill="url(#gSky)"/><path d="M6 42h65v18H6z" fill="#253a76"/><path d="M6 53c12-3 20 5 34 2v17H18Q6 72 6 60z" fill="#c9d2e0"/><path d="M10 68l8-6 12 3 10 2v5H16z" fill="#7b6850"/><path d="M41 51h32l7 26q0 5-6 5H39q-6 0-6-5z" fill="url(#gGlass)" stroke="#777"/><path d="M42 54h29l3 13H40z" fill="#bfc5c8"/><path d="M45 64l5-5 3 5zM56 61l6 1 1 5-7 1z" fill="#63707a"/><path d="M39 42q0-4 17.500-4T74 42v10q-17 5-35 0z" fill="#141414"/><ellipse cx="56.500" cy="41.500" rx="16" ry="3.200" fill="#343434"/></svg></div>
    <!-- AnyConnect -->
    <div class="app"><svg viewBox="0 0 77 78"><clipPath id="orb"><circle cx="38.500" cy="39" r="41"/></clipPath><circle cx="38.500" cy="39" r="41.500" fill="#e4e4e2" stroke="#7a8f9c"/><g clip-path="url(#orb)" fill="none" stroke-width="10"><path d="M2 60c20-12 40-8 52 12M60 0c12 22 12 40-12 62" stroke="#d2dfdf" stroke-width="6"/><path d="M-4 46C4 22 20 16 34 20c20 5 28 24 26 38 0 10-2 18-6 26" stroke="url(#gRing)"/><path d="M58 -2C42 6 34 18 38 30c4 14 14 19 26 19h20" stroke="url(#gRing)"/></g></svg></div>
    <i class="rule late"></i>
    <!-- Trash -->
    <div class="app"><svg viewBox="0 0 77 78"><path d="M5 5h67l-8 70q-1 7-25.500 7T13 75z" fill="url(#gCup)" opacity=".96"/><ellipse cx="38.500" cy="5" rx="33.500" ry="8" fill="#dad8cf" stroke="#f5f5f4" stroke-width="1.600"/></svg></div>
  </footer>
</main>
</body>
</html>
```
FILE: styles.css
```css
* { box-sizing: border-box; }

body {
  margin: 0;
  width: 2880px;
  height: 1800px;
  overflow: hidden;
  font-family: Inter, "Liberation Sans", sans-serif;
  background: #cfc6a2;
}

.defs { position: absolute; width: 0; height: 0; }

/* Menu bar */
.menubar {
  display: flex;
  align-items: flex-start;
  height: 48px;
  padding: 0 37px;
  font-size: 26px;
  line-height: 46px;
  color: #1f1c12;
  background: linear-gradient(90deg, #dac491, #dcc594 30%, #dfc99c 48%, #dccfa0 65%, #ddd1a4);
}
.menu-apple { width: 31px; height: 31px; margin: 6px 38px 0 0; fill: #1f1c12; }
.menus { display: flex; gap: 42.7px; letter-spacing: -.5px; }
.menus b { font-weight: 700; letter-spacing: 0; }
.status { display: flex; align-items: center; height: 48px; margin-left: auto; }
.status svg { margin-right: 36px; flex: none; }
.status svg:nth-of-type(4) { margin-right: 37px; }
.status svg:nth-of-type(6) { margin-right: 35px; }
.status svg:nth-of-type(5) { margin-right: 37px; }
.date { margin-right: 17px; }
.clock { letter-spacing: -.1px; }
.date, .clock { margin-top: -2px; }

/* Desktop and window */
.desktop {
  height: 1752px;
  padding-top: 2px;
  background: linear-gradient(90deg, #cbc194, #c9c0a0 30%, #cdc5aa 70%, #d3cab0);
}
.wallpaper-sliver {
  height: 2px;
  margin-top: -2px;
  background: linear-gradient(90deg, #98905f 815px, #a02a1a 825px, #5a1008 930px, #8e1d10 990px, #7e7a3a 1010px, #98905f 1070px);
}
.window {
  display: flex;
  flex-direction: column;
  height: 1608px;
  overflow: hidden;
  border-radius: 20px;
  background: #fff;
  box-shadow: 0 0 2px rgba(0, 0, 0, .5), 0 14px 56px rgba(0, 0, 0, .4);
}

/* Toolbar */
.toolbar { display: flex; height: 104px; flex: none; background: #fbfaf8; }
.tools-left, .tools-right { display: flex; align-items: center; }
.tools-left { width: 858px; padding: 0 24px 0 40px; }
.tools-right { flex: 1; justify-content: flex-end; padding-right: 30px; }
.light { width: 24px; height: 24px; margin-right: 16px; border-radius: 50%; border: 1px solid #0002; }
.red { background: #ec6a5e; }
.amber { background: #f4bf4f; }
.green { background: #61c554; margin-right: 0; }
.ico { width: 48px; height: 48px; flex: none; fill: none; stroke: #656565; stroke-linecap: round; stroke-linejoin: round; }
.home { margin: -6px 0 0 47px; }
.side { margin-left: 37px; }
.divider { width: 2px; height: 36px; margin-left: 8px; background: #e9e8e6; }
.chev { width: 24px; height: 24px; margin-left: 6px; }
.back { margin-left: 31px; }
.fwd { margin-left: 24px; stroke: #b9b9b8; }
.shield { margin-left: auto; }
.share { margin-left: 27px; }
.plus { margin-left: 24px; }
.grid { margin-left: 27px; }

.address {
  display: flex;
  align-items: center;
  width: 1164px;
  height: 56px;
  margin-top: 24px;
  padding: 0 10px 0 474px;
  border: 2px solid #dededc;
  border-radius: 14px;
  font-size: 26px;
  line-height: 54px;
  color: #4a4a4a;
}
.address svg { margin-right: 13px; }
.address span { letter-spacing: -.17px; padding-top: 3px; }
.address .reload { margin: 2px 0 0 auto; }

/* Tabs */
.tabs {
  display: grid;
  grid-template-columns: 72px 938px 936px 934px;
  flex: none;
  height: 58px;
  border-bottom: 2px solid #dcdbd9;
}
.tab {
  display: flex;
  align-items: center;
  border-right: 2px solid #d8d7d5;
  background: #ecebe9;
  box-shadow: inset 0 2px 1px -1px #b9b8b6;
  font-size: 22px;
  letter-spacing: .03px;
  color: #6d6d6c;
  white-space: nowrap;
}
.tab span { padding-top: 1px; }
.pinned { padding-left: 22px; }
.t1 { padding-left: 71px; }
.t1 svg { margin-right: 12px; }
.t2 { padding-left: 187px; }
.t2 svg { margin-right: 10px; }
.t3 { padding-left: 48px; border-right: 0; background: #fbfaf8; box-shadow: none; color: #424242; letter-spacing: -.25px; }
.letter {
  width: 32px;
  height: 32px;
  margin-right: 10px;
  border-radius: 7px;
  background: #9393a0;
  color: #fff;
  font: 600 22px/32px Inter, sans-serif;
  text-align: center;
}

/* Web page */
.page {
  flex: 1;
  padding: 14px 16px 0;
  font: 32px/36px "Liberation Serif", "Times New Roman", serif;
  color: #000;
}
h1 { margin: 0 2px 0 0; font-size: 64px; line-height: 74px; text-align: center; color: #377e22; white-space: nowrap; }
h2 { margin: 0; font-size: 48px; line-height: 56px; }
p { margin: 0; }
.cols { display: grid; grid-template-columns: 939px 969px 940px; }
.cases { margin-top: 83px; }
.results { margin-top: 180px; }
.results section:nth-child(2) { padding-right: 29px; }

label { display: flex; align-items: center; height: 46px; line-height: 46px; }
h2 + label { margin-top: 38px; }
input {
  width: 293px;
  height: 41px;
  margin: 3px 12px 0 4.500px;
  padding: 3px 0 0 4px;
  border: 1px solid #e9e9e9;
  border-bottom: 2px solid #bfbfbf;
  font: 22px Inter, sans-serif;
  color: #000;
}
button {
  display: block;
  width: 71px;
  height: 44px;
  margin: 6px 0 0 5px;
  padding: 0;
  border: 4px solid;
  border-color: #fff #6b6b6b #6b6b6b #fff;
  background: #ffff54;
  font: 22px/36px Inter, sans-serif;
  letter-spacing: -.3px;
  color: #222;
}
hr {
  height: 4px;
  margin: 40px 0 15px;
  border: 2px solid;
  border-color: #9a9a9a #eee #eee #9a9a9a;
}
table { border: 2px solid #000; border-spacing: 4px; border-collapse: separate; margin-top: 1px; }
td {
  padding: 1px 2px 3px;
  border: 2px solid #000;
  line-height: 36px;
  white-space: nowrap;
}

/* Dock */
.dock {
  position: relative;
  display: flex;
  width: 2708px;
  height: 126px;
  margin: 6px 0 0 86px;
  padding-left: 4px;
  border: 2px solid #dfd7b8;
  border-width: 2px 1px;
  border-radius: 38px;
  background: linear-gradient(#cfc4a2, #dcd2ae);
  box-shadow: 0 0 80px rgba(0, 0, 0, .24), 0 0 2px rgba(0, 0, 0, .35);
}
.app { position: relative; display: flex; justify-content: center; width: 104px; flex: none; }
.app svg { width: 77px; height: 78px; margin-top: 17px; overflow: visible; filter: drop-shadow(0 1px 2px rgba(0, 0, 0, .3)); }
.tv { margin-right: 2px; }
.running::after {
  content: "";
  position: absolute;
  left: 48px;
  top: 112px;
  width: 8px;
  height: 8px;
  border-radius: 50%;
  background: #5b5230;
}
.rule { width: 2px; height: 94px; margin: 14px 21px 0 24px; background: #a49a79; }
.late { margin: 14px 22px 0 24px; }
.badge {
  position: absolute;
  left: 67px;
  top: 8px;
  width: 36px;
  height: 36px;
  border-radius: 50%;
  background: #ea5545;
  color: #fff;
  font: 400 20px/36px Inter, sans-serif;
  text-align: center;
  box-shadow: 0 0 2px rgba(0, 0, 0, .4);
}
.cal-month { font: 600 15px Inter, sans-serif; fill: #fff; text-anchor: middle; }
.cal-day { font: 300 47px Inter, sans-serif; fill: #2a2a2a; text-anchor: middle; letter-spacing: -1px; }
.tv-word { font: 500 32px Inter, sans-serif; fill: #fff; letter-spacing: -1px; }
```
